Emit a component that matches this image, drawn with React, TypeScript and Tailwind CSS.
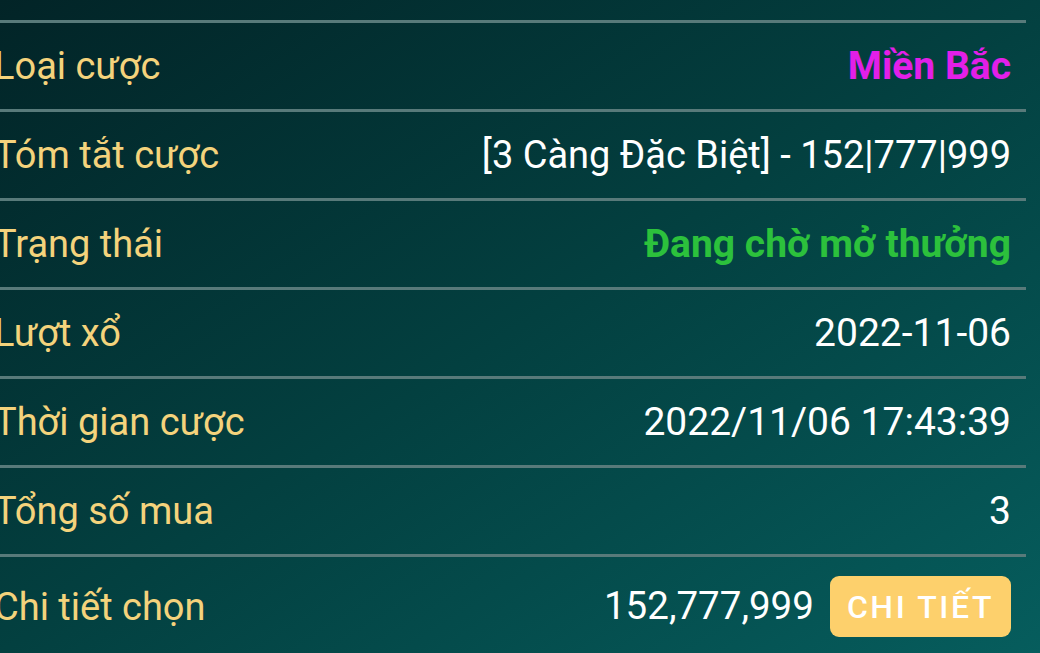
const rows: { label: string; value: React.ReactNode; tall?: boolean }[] = [
  {
    label: "Loại cược",
    value: <span className="font-bold text-[#e21fe8]">Miền Bắc</span>,
  },
  {
    label: "Tóm tắt cược",
    value: <span className="text-[38px]">[3 Càng Đặc Biệt] - 152|777|999</span>,
  },
  {
    label: "Trạng thái",
    value: <span className="font-bold text-[#2cc13c]">Đang chờ mở thưởng</span>,
  },
  { label: "Lượt xổ", value: "2022-11-06" },
  { label: "Thời gian cược", value: "2022/11/06 17:43:39" },
  { label: "Tổng số mua", value: "3" },
  {
    label: "Chi tiết chọn",
    tall: true,
    value: (
      <div className="flex items-center gap-[16px]">
        <span className="text-[38.5px]">152,777,999</span>
        <button className="h-[61px] rounded-[9px] bg-[#fdd06c] px-[17px] text-[32px] font-medium tracking-[2.6px] text-white">
          CHI TIẾT
        </button>
      </div>
    ),
  },
];

export default function App() {
  return (
    <div
      className="h-[653px] w-[1040px] overflow-hidden bg-gradient-to-br from-[#022427] via-[#034040] to-[#065d5d] pt-[20px] leading-none"
      style={{ fontFamily: "Roboto, 'Noto Sans', sans-serif" }}
    >
      <div className="w-[1026px]">
        {rows.map((r) => (
          <div
            key={r.label}
            className={
              "flex items-center justify-between border-t-[3px] border-[#587a7a] pr-[15px] " +
              (r.tall ? "h-[102px]" : "h-[89px]")
            }
          >
            <span className="-ml-[6px] text-[38px] text-[#f4d37c]">{r.label}</span>
            <div className="text-[39px] text-white">{r.value}</div>
          </div>
        ))}
      </div>
    </div>
  );
}
